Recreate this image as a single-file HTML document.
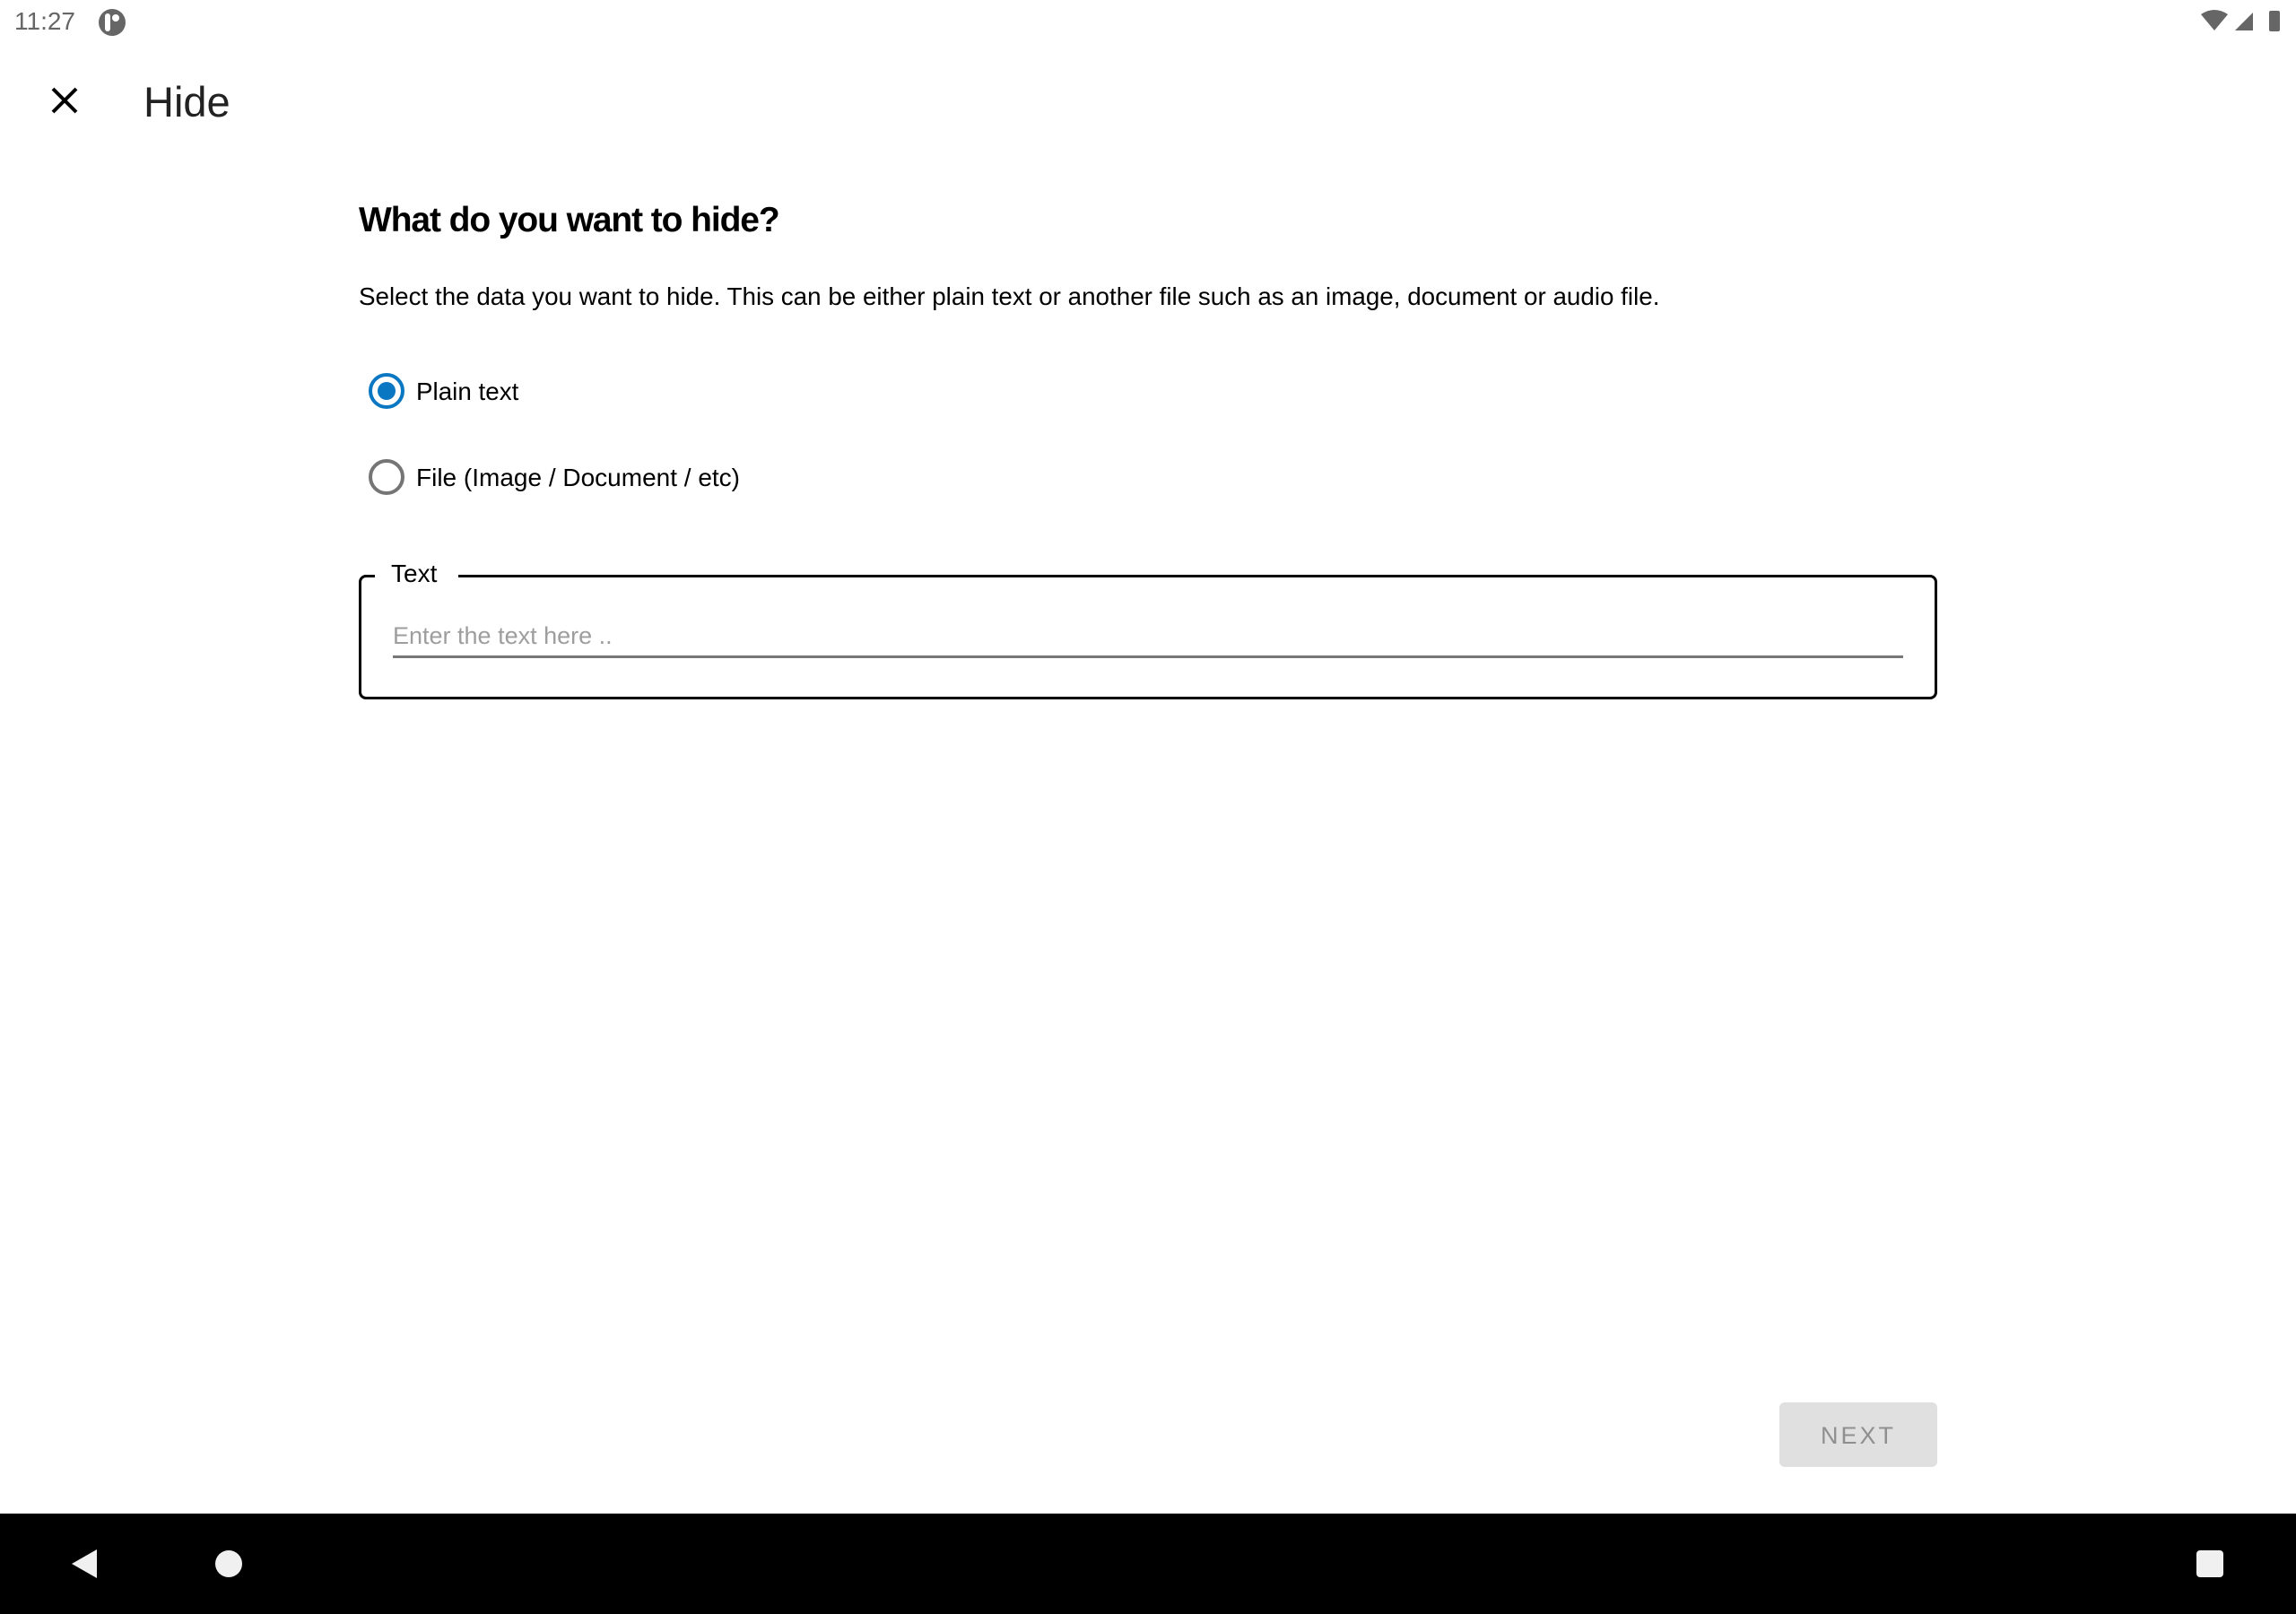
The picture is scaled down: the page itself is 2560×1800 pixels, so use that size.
<!DOCTYPE html>
<html><head><meta charset="utf-8"><style>
*{margin:0;padding:0;box-sizing:border-box}
body{width:2560px;height:1800px;background:#fff;position:relative;overflow:hidden;font-family:"Liberation Sans",Roboto,sans-serif;color:#000}
.a{position:absolute;white-space:nowrap}
</style></head><body>
<div class="a" style="left:16px;top:8px;font-size:28px;color:#666">11:27</div>
<svg class="a" style="left:108px;top:8px" width="34" height="34" viewBox="0 0 34 34"><circle cx="17" cy="17" r="15" fill="#666"/><rect x="9" y="7" width="6" height="20" rx="3" fill="#fff"/><circle cx="21" cy="12" r="4" fill="#fff"/></svg>
<svg class="a" style="left:2452px;top:10px" width="100" height="28" viewBox="0 0 100 28"><path d="M2 6 Q17 -4 32 6 L17 24 Z" fill="#666"/><path d="M40 24 L60 4 L60 24 Z" fill="#666"/><rect x="78" y="2" width="12" height="23" rx="2" fill="#666"/></svg>
<svg class="a" style="left:56px;top:96px" width="32" height="32" viewBox="0 0 32 32"><path d="M3 3L29 29M29 3L3 29" stroke="#000" stroke-width="4"/></svg>
<div class="a" style="left:160px;top:86px;font-size:47px;color:#222">Hide</div>
<div class="a" style="left:400px;top:224px;font-size:39px;font-weight:bold;letter-spacing:-1.1px">What do you want to hide?</div>
<div class="a" style="left:400px;top:315px;font-size:27.8px">Select the data you want to hide. This can be either plain text or another file such as an image, document or audio file.</div>
<svg class="a" style="left:409px;top:414px" width="44" height="44"><circle cx="22" cy="22" r="18" fill="none" stroke="#0a77c2" stroke-width="4"/><circle cx="22" cy="22" r="10" fill="#0a77c2"/></svg>
<div class="a" style="left:464px;top:421px;font-size:27.8px">Plain text</div>
<svg class="a" style="left:409px;top:510px" width="44" height="44"><circle cx="22" cy="22" r="18" fill="none" stroke="#757575" stroke-width="4"/></svg>
<div class="a" style="left:464px;top:517px;font-size:28px">File (Image / Document / etc)</div>
<div class="a" style="left:400px;top:641px;width:1760px;height:139px;border:3px solid #000;border-radius:8px"></div>
<div class="a" style="left:418px;top:630px;width:93px;height:20px;background:#fff"></div>
<div class="a" style="left:436px;top:624px;font-size:28px">Text</div>
<div class="a" style="left:438px;top:694px;font-size:27px;color:#9e9e9e">Enter the text here ..</div>
<div class="a" style="left:438px;top:731px;width:1684px;height:3px;background:#777"></div>
<div class="a" style="left:1984px;top:1564px;width:176px;height:72px;background:#e0e0e0;border-radius:6px;font-size:27px;color:#8f8f8f;letter-spacing:3px;text-align:center;line-height:74px">NEXT</div>
<div class="a" style="left:0;top:1688px;width:2560px;height:112px;background:#000"></div>
<svg class="a" style="left:76px;top:1726px" width="36" height="36"><path d="M32 2L32 34L4 18Z" fill="#f0f0f0"/></svg>
<div class="a" style="left:240px;top:1729px;width:30px;height:30px;border-radius:50%;background:#f0f0f0"></div>
<div class="a" style="left:2449px;top:1729px;width:30px;height:30px;border-radius:4px;background:#f0f0f0"></div>
</body></html>
